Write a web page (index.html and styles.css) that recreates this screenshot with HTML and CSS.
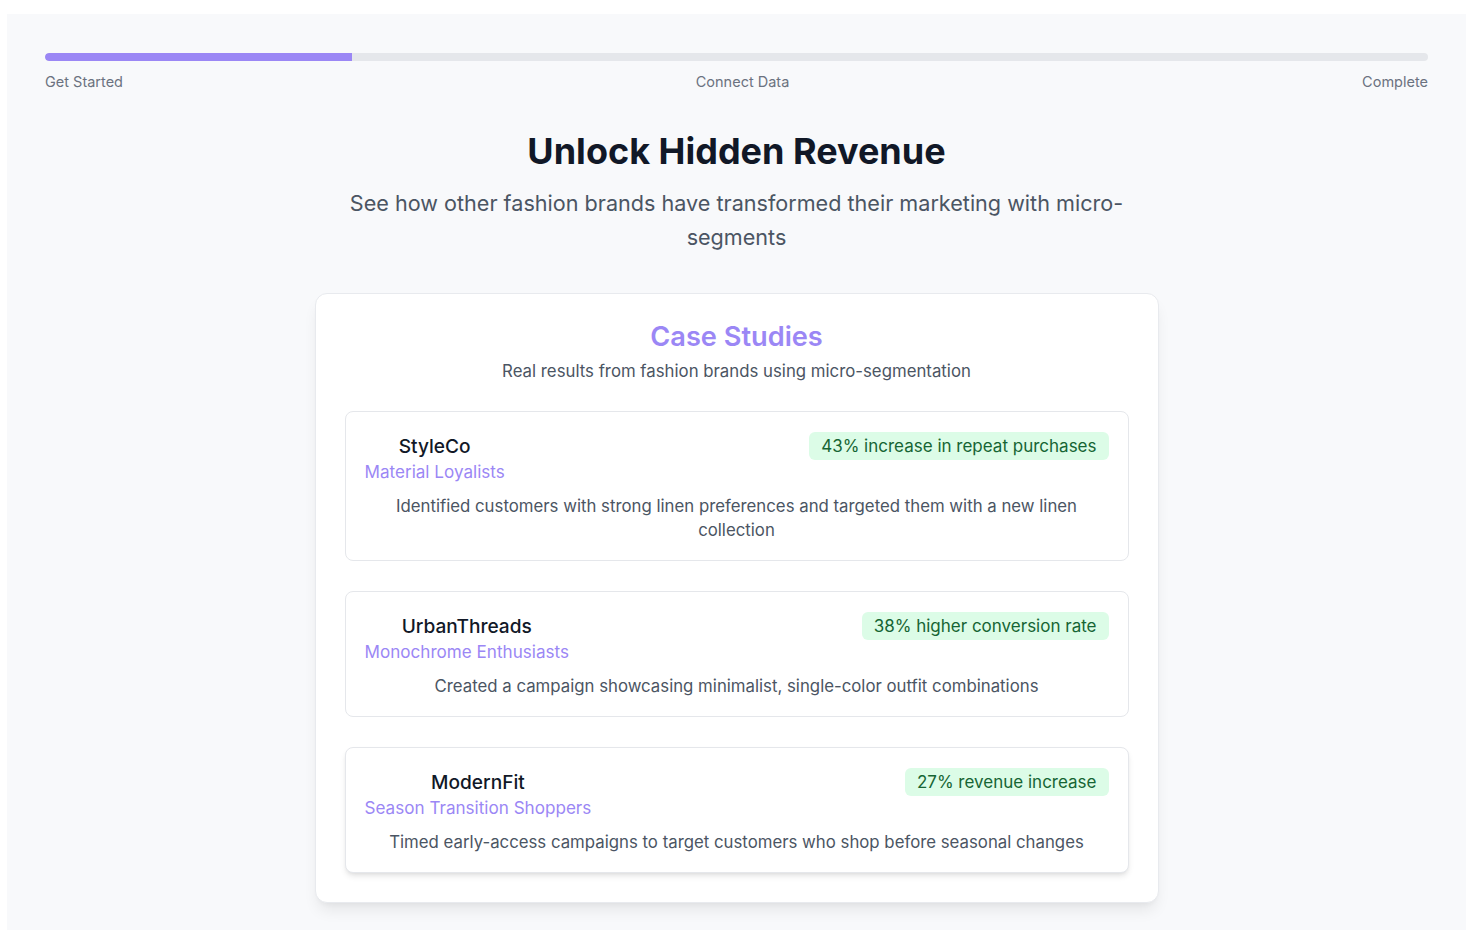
FILE: index.html
```html
<!DOCTYPE html>
<html lang="en">
<head>
<meta charset="utf-8">
<title>Unlock Hidden Revenue</title>
<link rel="stylesheet" href="styles.css">
</head>
<body>
<div class="page">
  <div class="progress">
    <div class="progress-track"><div class="progress-fill" style="width: 22.2%"></div></div>
    <div class="progress-labels">
      <span>Get Started</span>
      <span>Connect Data</span>
      <span>Complete</span>
    </div>
  </div>

  <header class="hero">
    <h1 class="hero-title">Unlock Hidden Revenue</h1>
    <p class="hero-sub">See how other fashion brands have transformed their marketing with micro-segments</p>
  </header>

  <section class="panel">
    <h2 class="panel-title">Case Studies</h2>
    <p class="panel-sub">Real results from fashion brands using micro-segmentation</p>

    <div class="cases">
      <article class="case">
        <div class="case-head">
          <div class="case-id">
            <h3 class="case-brand">StyleCo</h3>
            <p class="case-segment">Material Loyalists</p>
          </div>
          <span class="badge">43% increase in repeat purchases</span>
        </div>
        <p class="case-desc">Identified customers with strong linen preferences and targeted them with a new linen collection</p>
      </article>

      <article class="case">
        <div class="case-head">
          <div class="case-id">
            <h3 class="case-brand">UrbanThreads</h3>
            <p class="case-segment">Monochrome Enthusiasts</p>
          </div>
          <span class="badge">38% higher conversion rate</span>
        </div>
        <p class="case-desc">Created a campaign showcasing minimalist, single-color outfit combinations</p>
      </article>

      <article class="case case-raised">
        <div class="case-head">
          <div class="case-id">
            <h3 class="case-brand">ModernFit</h3>
            <p class="case-segment">Season Transition Shoppers</p>
          </div>
          <span class="badge">27% revenue increase</span>
        </div>
        <p class="case-desc">Timed early-access campaigns to target customers who shop before seasonal changes</p>
      </article>
    </div>
  </section>
</div>
</body>
</html>
```

FILE: styles.css
```css
* { box-sizing: border-box; }

html, body {
  margin: 0;
  padding: 0;
  background: #ffffff;
}

body {
  font-family: Inter, "Noto Sans", "Liberation Sans", sans-serif;
  color: #111827;
}

.page {
  margin: 14px 4px 0 7px;
  background: #f8f9fb;
  padding: 39px 38px 27px;
}

.progress-track {
  height: 8px;
  background: #e5e7eb;
  border-radius: 4px;
  overflow: hidden;
}

.progress-fill {
  height: 100%;
  background: #9b87f5;
  border-radius: 4px 0 0 4px;
}

.progress-labels {
  display: flex;
  justify-content: space-between;
  margin-top: 11px;
  font-size: 14.5px;
  line-height: 20px;
  color: #6b7280;
}

.hero {
  text-align: center;
  margin-top: 39px;
}

.hero-title {
  margin: 0;
  font-size: 36px;
  line-height: 40px;
  font-weight: 700;
  color: #111827;
}

.hero-sub {
  margin: 15px auto 0;
  max-width: 800px;
  font-size: 21.6px;
  line-height: 34px;
  color: #4b5563;
}

.panel {
  width: 844px;
  margin: 39px auto 0;
  background: #ffffff;
  border: 1px solid #e8eaee;
  border-radius: 12px;
  padding: 29px;
  text-align: center;
  box-shadow: 0 10px 15px -3px rgba(0, 0, 0, 0.08), 0 4px 6px -4px rgba(0, 0, 0, 0.06);
}

.panel-title {
  margin: 0;
  font-size: 27.2px;
  line-height: 28px;
  font-weight: 600;
  color: #9b87f5;
}

.panel-sub {
  margin: 8px 0 0;
  font-size: 16.8px;
  line-height: 24px;
  color: #4b5563;
}

.cases {
  margin-top: 28px;
  display: flex;
  flex-direction: column;
  gap: 30px;
}

.case {
  border: 1px solid #e5e7eb;
  border-radius: 8px;
  padding: 20px 19px 18px;
  background: #ffffff;
}

.case-raised {
  box-shadow: 0 4px 6px -1px rgba(0, 0, 0, 0.1), 0 2px 4px -2px rgba(0, 0, 0, 0.08);
}

.case-head {
  display: flex;
  justify-content: space-between;
  align-items: flex-start;
}

.case-brand {
  margin: 0;
  font-size: 19.1px;
  line-height: 28px;
  font-weight: 500;
  color: #111827;
}

.case-segment {
  margin: 0;
  font-size: 17.1px;
  line-height: 24px;
  color: #9b87f5;
}

.badge {
  background: #dcfce7;
  color: #166534;
  font-size: 17px;
  line-height: 24px;
  padding: 2px 12px;
  border-radius: 6px;
}

.case-desc {
  margin: 10px 0 0;
  font-size: 16.8px;
  line-height: 24px;
  color: #4b5563;
}
```
